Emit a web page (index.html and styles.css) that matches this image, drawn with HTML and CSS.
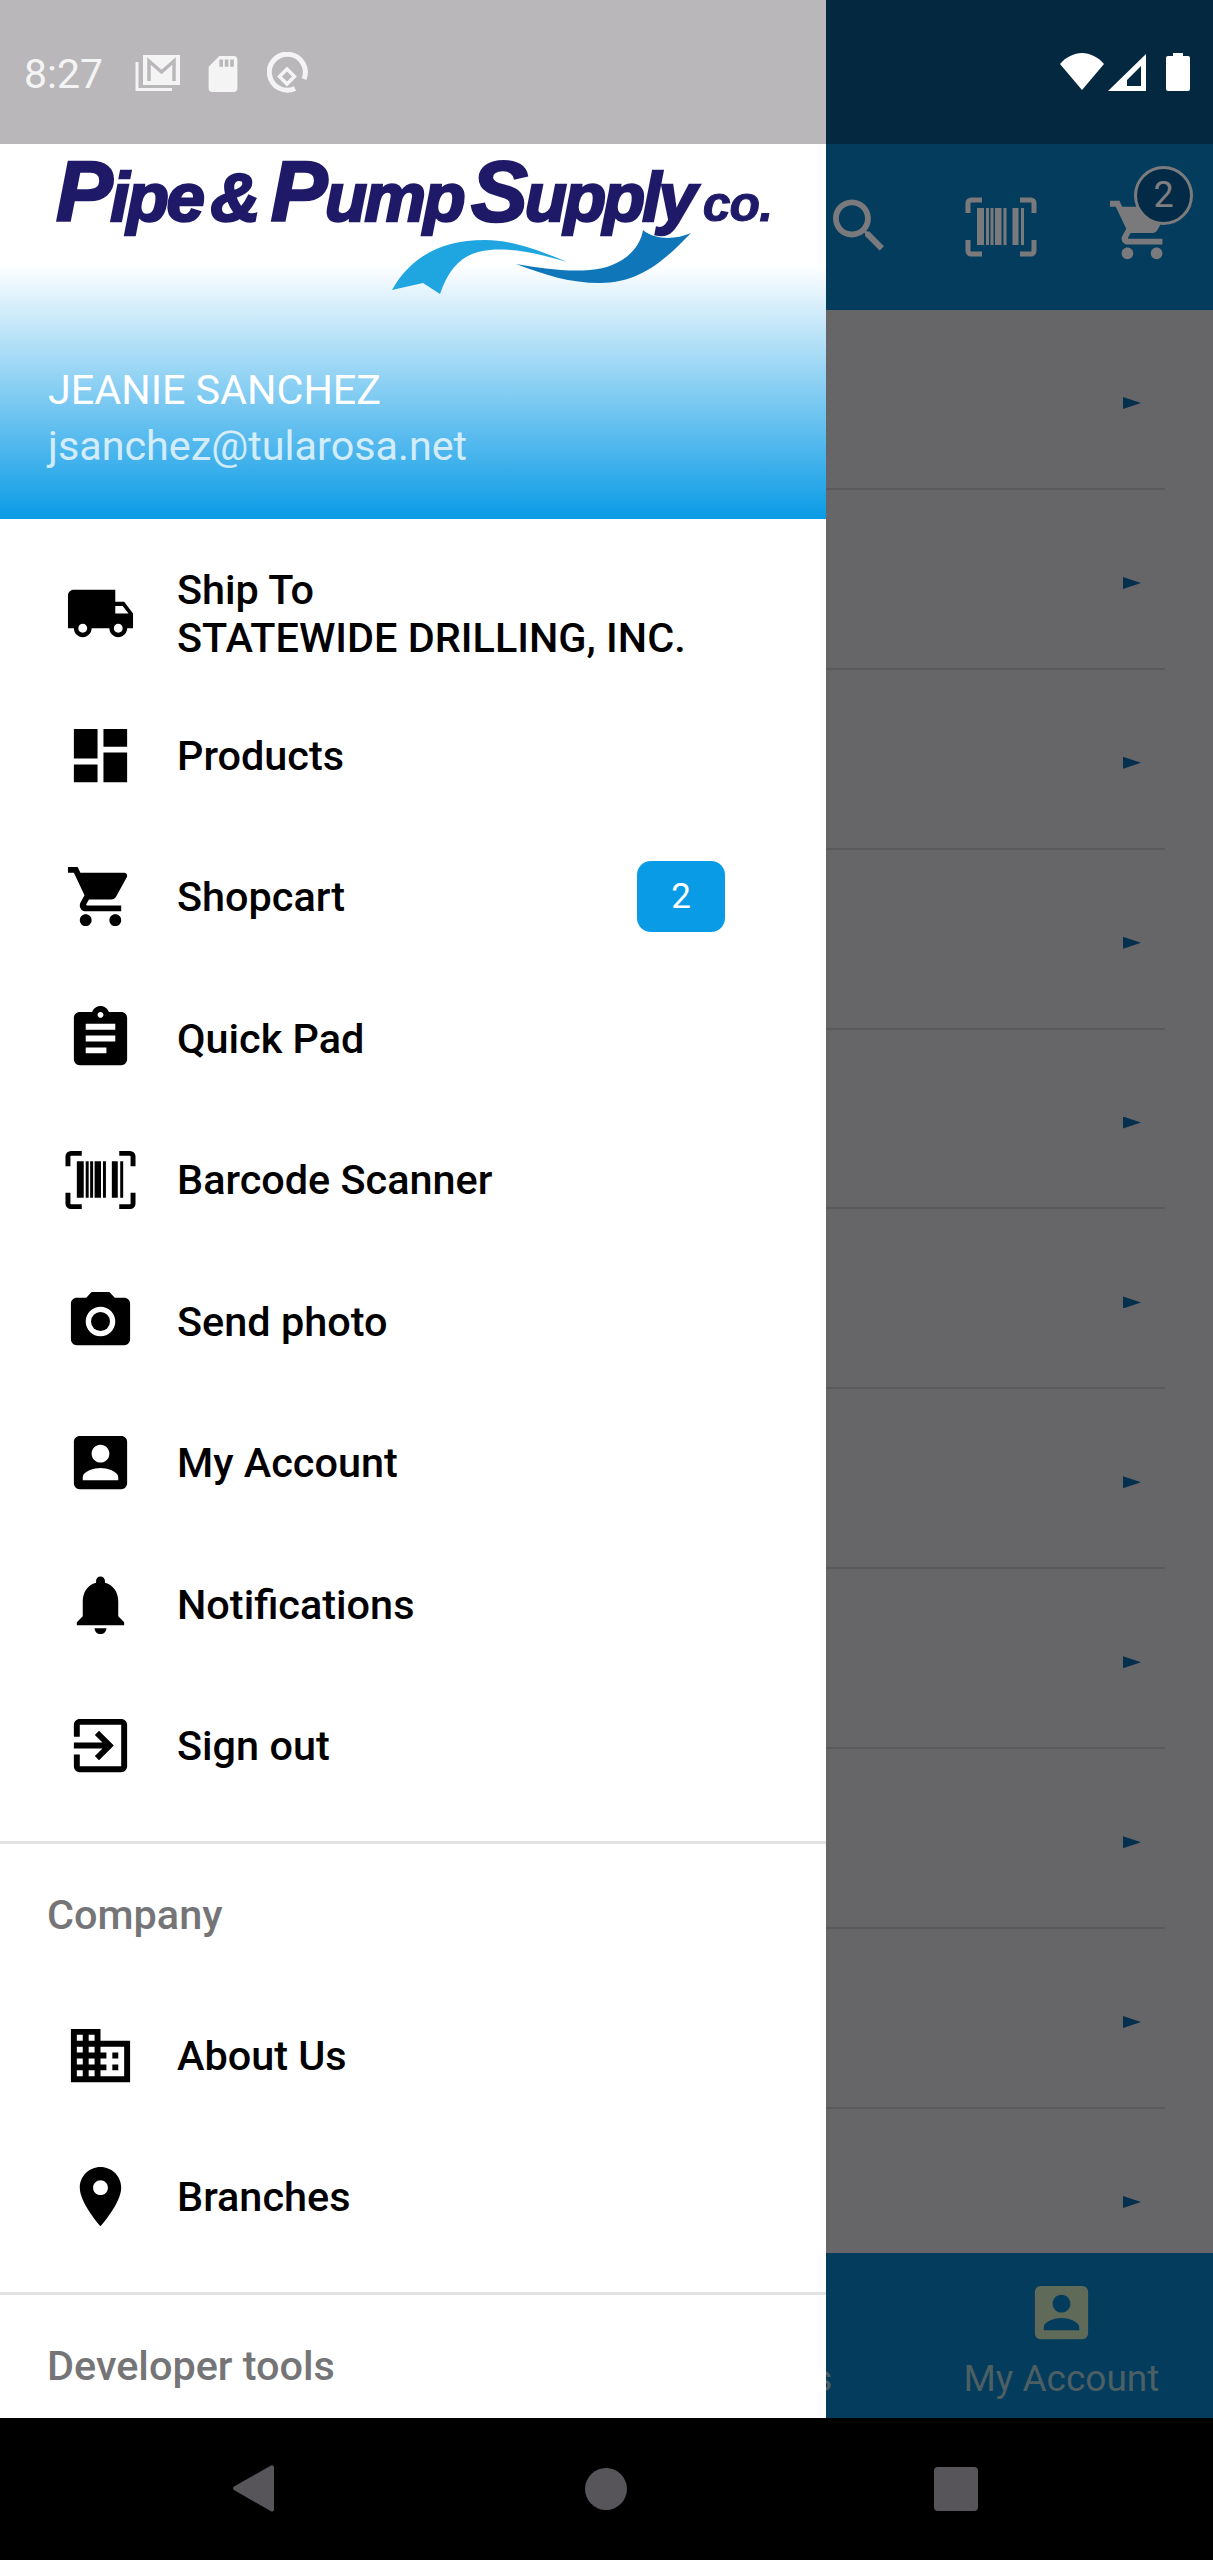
FILE: index.html
```html
<!DOCTYPE html>
<html lang="en">
<head>
    <meta charset="UTF-8">
    <meta name="viewport" content="width=device-width, initial-scale=1.0">
    <title>Pipe &amp; Pump Supply Co.</title>
    <link rel="stylesheet" href="styles.css">
</head>
<body>
    <svg class="defs" width="0" height="0">
        <symbol id="ic-cart" viewBox="0 0 24 24"><path d="M7 18c-1.1 0-1.99.9-1.99 2S5.9 22 7 22s2-.9 2-2-.9-2-2-2zM1 2v2h2l3.6 7.59-1.35 2.45c-.16.28-.25.61-.25.96 0 1.1.9 2 2 2h12v-2H7.42c-.14 0-.25-.11-.25-.25l.03-.12.9-1.63h7.45c.75 0 1.41-.41 1.75-1.03l3.58-6.49c.08-.14.12-.31.12-.48 0-.55-.45-1-1-1H5.21l-.94-2H1zm16 16c-1.1 0-1.99.9-1.99 2s.89 2 1.99 2 2-.9 2-2-.9-2-2-2z"/></symbol>
        <symbol id="ic-account" viewBox="0 0 24 24"><path d="M3 5v14c0 1.1.89 2 2 2h14c1.1 0 2-.9 2-2V5c0-1.1-.9-2-2-2H5c-1.11 0-2 .9-2 2zm12 4c0 1.66-1.34 3-3 3s-3-1.34-3-3 1.34-3 3-3 3 1.34 3 3zm-9 8c0-2 4-3.1 6-3.1s6 1.1 6 3.1v1H6v-1z"/></symbol>
        <symbol id="ic-barcode" viewBox="0 0 72 60">
            <path d="M17 3H6a3 3 0 0 0-3 3v10M55 3h11a3 3 0 0 1 3 3v10M17 57H6a3 3 0 0 1-3-3V43M55 57h11a3 3 0 0 0 3-3V43" fill="none" stroke="currentColor" stroke-width="5"/>
            <rect x="12" y="11" width="7" height="37"/><rect x="21" y="11" width="3" height="37"/><rect x="25.500" y="11" width="3" height="37"/>
            <rect x="30" y="11" width="6.500" height="37"/><rect x="38.500" y="11" width="3" height="37"/><rect x="47.500" y="11" width="6" height="37"/><rect x="56" y="11" width="3" height="37"/>
        </symbol>
    </svg>

    <div class="app">
        <div class="status-bar">
            <div class="status-right">
                <svg class="st-wifi" viewBox="0 0 44 37"><path d="M0 11C6 4 14 0 22 0s16 4 22 11L22 37z"/></svg>
                <svg class="st-signal" viewBox="0 0 38 37"><path fill-rule="evenodd" d="M38 0v37H0zM33 12 19 26v6h14z"/></svg>
                <svg class="st-battery" viewBox="0 0 24 38"><path d="M7 0h10v3h5a2 2 0 0 1 2 2v31a2 2 0 0 1-2 2H2a2 2 0 0 1-2-2V5a2 2 0 0 1 2-2h5z"/></svg>
            </div>
        </div>
        <div class="app-bar">
            <svg class="bar-search" viewBox="3 3 17.5 17.5"><path d="M15.5 14h-.79l-.28-.27C15.41 12.59 16 11.11 16 9.5 16 5.91 13.09 3 9.5 3S3 5.91 3 9.5 5.91 16 9.5 16c1.61 0 3.09-.59 4.23-1.57l.27.28v.79l5 4.99L20.49 19l-4.99-5zm-6 0C7.01 14 5 11.99 5 9.5S7.01 5 9.5 5 14 7.01 14 9.5 11.99 14 9.5 14z"/></svg>
            <svg class="bar-barcode"><use href="#ic-barcode"/></svg>
            <div class="bar-cart">
                <svg class="bar-cart-icon"><use href="#ic-cart"/></svg>
                <span class="bar-badge">2</span>
            </div>
        </div>
        <div class="rows">
            <div class="row"><span class="row-arrow"></span></div>
            <div class="row"><span class="row-arrow"></span></div>
            <div class="row"><span class="row-arrow"></span></div>
            <div class="row"><span class="row-arrow"></span></div>
            <div class="row"><span class="row-arrow"></span></div>
            <div class="row"><span class="row-arrow"></span></div>
            <div class="row"><span class="row-arrow"></span></div>
            <div class="row"><span class="row-arrow"></span></div>
            <div class="row"><span class="row-arrow"></span></div>
            <div class="row"><span class="row-arrow"></span></div>
            <div class="row"><span class="row-arrow"></span></div>
        </div>
        <div class="tabs">
            <div class="tab"></div>
            <div class="tab"></div>
            <div class="tab"><span class="tab-label">Products</span></div>
            <div class="tab">
                <svg class="tab-icon"><use href="#ic-account"/></svg>
                <span class="tab-label">My Account</span>
            </div>
        </div>
        <div class="nav-bar">
            <svg class="nav-back" viewBox="0 0 41 47"><path d="M38 .6A2 2 0 0 1 41 2.5v42a2 2 0 0 1-3 1.8L1 25a2 2 0 0 1 0-3.4z"/></svg>
            <span class="nav-home"></span>
            <span class="nav-recent"></span>
        </div>
    </div>

    <div class="drawer">
        <div class="drawer-status">
            <span class="clock">8:27</span>
            <svg class="st-mail" viewBox="0 0 45 37" fill="none" stroke="currentColor">
                <path d="M2 7v27.500h35" stroke-width="3"/>
                <path fill="currentColor" stroke="none" d="M8 0h37v30H8z"/>
                <path d="M14 26V6l12.500 11L39 6v20" stroke="#b9b7ba" stroke-width="3.500"/>
            </svg>
            <svg class="st-sd" viewBox="4 2 16 20"><path d="M18 2h-8L4.020 8 4 20c0 1.100.9 2 2 2h12c1.100 0 2-.9 2-2V4c0-1.100-.9-2-2-2zm-6 6h-2V4h2v4zm3 0h-2V4h2v4zm3 0h-2V4h2v4z"/></svg>
            <svg class="st-q" viewBox="0 0 41 41" fill="none" stroke="currentColor">
                <path d="M28 36.500A18 18 0 1 1 37 27" stroke-width="5"/>
                <path d="M20 17 27.500 24.500 20 32 12.500 24.500z" stroke-width="3.500"/>
            </svg>
        </div>
        <div class="drawer-header">
            <div class="logo">
                <div class="logo-text">
                    <span class="logo-word"><b>P</b>ipe</span>
                    <span class="logo-word logo-amp">&amp;</span>
                    <span class="logo-word"><b>P</b>ump</span>
                    <span class="logo-word logo-supply"><b>S</b>upply</span>
                    <span class="logo-co">co.</span>
                </div>
                <svg class="logo-swoosh" viewBox="380 225 320 75">
                    <path fill="#1fa6e0" d="M392 290C410 258 440 240 485 240c30 0 60 13 82 22-27-8-52-14-77-12-25 2-40 15-50 44l-17-11z"/>
                    <path fill="#0f76b9" d="M643 230c-3 20-23 38-53 40-25 2-50-2-74-6 29 11 54 19 84 19 40 0 65-23 91-50-16 7-36 7-48-3z"/>
                </svg>
            </div>
            <div class="user">
                <div class="user-name">JEANIE SANCHEZ</div>
                <div class="user-mail">jsanchez@tularosa.net</div>
            </div>
        </div>

        <div class="menu-group">
            <div class="menu-item">
                <svg class="menu-icon" viewBox="0 0 24 24"><path d="M20 8h-3V4H3c-1.100 0-2 .9-2 2v11h2c0 1.660 1.340 3 3 3s3-1.340 3-3h6c0 1.660 1.340 3 3 3s3-1.340 3-3h2v-5l-3-4zM6 18.500c-.83 0-1.500-.67-1.500-1.500s.67-1.500 1.500-1.500 1.500.67 1.500 1.500-.67 1.500-1.500 1.500zm13.500-9l1.960 2.500H17V9.500h2.500zm-1.500 9c-.83 0-1.500-.67-1.500-1.500s.67-1.500 1.500-1.500 1.500.67 1.500 1.500-.67 1.500-1.500 1.500z"/></svg>
                <span class="menu-label">Ship To<br>STATEWIDE DRILLING, INC.</span>
            </div>
            <div class="menu-item">
                <svg class="menu-icon" viewBox="0 0 24 24"><path d="M3 13h8V3H3v10zm0 8h8v-6H3v6zm10 0h8V11h-8v10zm0-18v6h8V3h-8z"/></svg>
                <span class="menu-label">Products</span>
            </div>
            <div class="menu-item">
                <svg class="menu-icon"><use href="#ic-cart"/></svg>
                <span class="menu-label">Shopcart</span>
                <span class="menu-badge">2</span>
            </div>
            <div class="menu-item">
                <svg class="menu-icon" viewBox="0 0 24 24"><path d="M19 3h-4.180C14.400 1.840 13.300 1 12 1c-1.300 0-2.400.84-2.820 2H5c-1.100 0-2 .9-2 2v14c0 1.100.9 2 2 2h14c1.100 0 2-.9 2-2V5c0-1.100-.9-2-2-2zm-7 0c.55 0 1 .45 1 1s-.45 1-1 1-1-.45-1-1 .45-1 1-1zm2 14H7v-2h7v2zm3-4H7v-2h10v2zm0-4H7V7h10v2z"/></svg>
                <span class="menu-label">Quick Pad</span>
            </div>
            <div class="menu-item">
                <svg class="menu-icon menu-icon-barcode"><use href="#ic-barcode"/></svg>
                <span class="menu-label">Barcode Scanner</span>
            </div>
            <div class="menu-item">
                <svg class="menu-icon" viewBox="0 0 24 24"><circle cx="12" cy="12" r="3.200"/><path d="M9 2L7.170 4H4c-1.100 0-2 .9-2 2v12c0 1.100.9 2 2 2h16c1.100 0 2-.9 2-2V6c0-1.100-.9-2-2-2h-3.170L15 2H9zm3 15c-2.760 0-5-2.240-5-5s2.240-5 5-5 5 2.240 5 5-2.240 5-5 5z"/></svg>
                <span class="menu-label">Send photo</span>
            </div>
            <div class="menu-item">
                <svg class="menu-icon"><use href="#ic-account"/></svg>
                <span class="menu-label">My Account</span>
            </div>
            <div class="menu-item">
                <svg class="menu-icon" viewBox="0 0 24 24"><path d="M12 22c1.100 0 2-.9 2-2h-4c0 1.100.89 2 2 2zm6-6v-5c0-3.070-1.640-5.640-4.500-6.320V4c0-.83-.67-1.500-1.500-1.500s-1.500.67-1.500 1.500v.68C7.630 5.360 6 7.920 6 11v5l-2 2v1h16v-1l-2-2z"/></svg>
                <span class="menu-label">Notifications</span>
            </div>
            <div class="menu-item">
                <svg class="menu-icon" viewBox="0 0 24 24"><path d="M10.090 15.590L11.500 17l5-5-5-5-1.410 1.410L12.670 11H3v2h9.670l-2.580 2.590zM19 3H5c-1.110 0-2 .9-2 2v4h2V5h14v14H5v-4H3v4c0 1.100.89 2 2 2h14c1.100 0 2-.9 2-2V5c0-1.100-.9-2-2-2z"/></svg>
                <span class="menu-label">Sign out</span>
            </div>
        </div>

        <div class="menu-group menu-group-titled">
            <div class="menu-title">Company</div>
            <div class="menu-item">
                <svg class="menu-icon" viewBox="0 0 24 24"><path d="M12 7V3H2v18h20V7H12zM6 19H4v-2h2v2zm0-4H4v-2h2v2zm0-4H4V9h2v2zm0-4H4V5h2v2zm4 12H8v-2h2v2zm0-4H8v-2h2v2zm0-4H8V9h2v2zm0-4H8V5h2v2zm10 12h-8v-2h2v-2h-2v-2h2v-2h-2V9h8v10zm-2-8h-2v2h2v-2zm0 4h-2v2h2v-2z"/></svg>
                <span class="menu-label">About Us</span>
            </div>
            <div class="menu-item">
                <svg class="menu-icon" viewBox="0 0 24 24"><path d="M12 2C8.130 2 5 5.130 5 9c0 5.250 7 13 7 13s7-7.750 7-13c0-3.870-3.130-7-7-7zm0 9.500c-1.380 0-2.500-1.120-2.500-2.500s1.120-2.500 2.500-2.500 2.500 1.120 2.500 2.500-1.120 2.500-2.500 2.500z"/></svg>
                <span class="menu-label">Branches</span>
            </div>
        </div>

        <div class="menu-group-titled">
            <div class="menu-title">Developer tools</div>
        </div>
    </div>
</body>
</html>
```

FILE: styles.css
```css
body {
    margin: 0;
    position: relative;
    width: 1213px;
    height: 2560px;
    overflow: hidden;
    font-family: Roboto, "Liberation Sans", sans-serif;
    background-color: #000;
}
.defs {
    position: absolute;
}

/* Screen behind the drawer, already dimmed */
.app {
    display: flex;
    flex-direction: column;
    height: 2560px;
}
.status-bar {
    height: 144px;
    flex-shrink: 0;
    display: flex;
    justify-content: flex-end;
    background-color: #03283f;
}
.status-right {
    display: flex;
    align-items: flex-start;
    padding: 53px 23px 0 0;
    fill: #fff;
}
.st-wifi {
    width: 44px;
    height: 37px;
}
.st-signal {
    width: 38px;
    height: 37px;
    margin: 1px 20px 0 4px;
}
.st-battery {
    width: 24px;
    height: 38px;
}
.app-bar {
    height: 166px;
    flex-shrink: 0;
    position: relative;
    display: flex;
    align-items: flex-start;
    justify-content: flex-end;
    background-color: #043c5d;
    color: #7a7a7c;
    fill: #7a7a7c;
}
.bar-search {
    width: 51px;
    height: 52px;
    margin: 55px 81px 0 0;
}
.bar-barcode {
    width: 72px;
    height: 60px;
    margin: 53px 73px 0 0;
}
.bar-cart {
    width: 103px;
    height: 114px;
    position: relative;
}
.bar-cart-icon {
    position: absolute;
    left: -3px;
    top: 51px;
    width: 70px;
    height: 70px;
}
.bar-badge {
    position: absolute;
    left: 24px;
    top: 22px;
    width: 53px;
    height: 53px;
    border: 3px solid #7b7b7d;
    border-radius: 50%;
    background-color: #032b47;
    color: #7f7f81;
    font-size: 36px;
    line-height: 53px;
    text-align: center;
}
.rows {
    flex: 1;
    overflow: hidden;
    background-color: #666567;
}
.row {
    height: 177.900px;
    margin-right: 48px;
    position: relative;
    border-bottom: 2px solid #5a595b;
}
.row-arrow {
    position: absolute;
    right: 24px;
    top: 87px;
    width: 18px;
    height: 12px;
    background-color: #05304d;
    clip-path: polygon(0 0, 100% 50%, 0 100%);
}
.tabs {
    height: 165px;
    flex-shrink: 0;
    display: grid;
    grid-template-columns: repeat(4, 303.25px);
    background-color: #043c5d;
}
.tab {
    display: flex;
    flex-direction: column;
    justify-content: flex-end;
    align-items: center;
    padding-bottom: 17px;
}
.tab-icon {
    width: 71px;
    height: 71px;
    margin-bottom: 9px;
    fill: #5f6a58;
}
.tab-label {
    font-size: 37px;
    line-height: 44px;
    color: #4c5f62;
}
.nav-bar {
    height: 142px;
    flex-shrink: 0;
    position: relative;
    background-color: #000;
}
.nav-back {
    position: absolute;
    left: 233px;
    top: 47px;
    width: 41px;
    height: 47px;
    fill: #57555a;
}
.nav-home {
    position: absolute;
    left: 585px;
    top: 50px;
    width: 42px;
    height: 42px;
    border-radius: 50%;
    background-color: #57555a;
}
.nav-recent {
    position: absolute;
    left: 934px;
    top: 49px;
    width: 44px;
    height: 44px;
    border-radius: 4px;
    background-color: #57555a;
}

/* Drawer */
.drawer {
    position: absolute;
    left: 0;
    top: 0;
    width: 826px;
    height: 2418px;
    overflow: hidden;
    background-color: #fff;
    color: #000;
}
.drawer-status {
    height: 144px;
    display: flex;
    align-items: flex-start;
    background-color: #b9b7ba;
    color: #f4f4f5;
    fill: #f4f4f5;
}
.clock {
    margin: 52px 0 0 24px;
    width: 111px;
    font-size: 41px;
    line-height: 44px;
}
.st-mail {
    width: 45px;
    height: 37px;
    margin-top: 55px;
}
.st-sd {
    width: 30px;
    height: 36px;
    margin: 56px 0 0 28px;
}
.st-q {
    width: 41px;
    height: 41px;
    margin: 52px 0 0 29px;
}
.drawer-header {
    height: 375px;
    box-sizing: border-box;
    padding: 10px 0 0 47px;
    background: linear-gradient(#fff 0, #fff 120px, #0a9be6 375px);
    color: #fff;
}
.logo {
    height: 147px;
    margin-left: 9px;
    position: relative;
}
.logo-text {
    display: flex;
    align-items: baseline;
    height: 75px;
    font-family: "Liberation Sans", Arial, sans-serif;
    font-style: italic;
    font-weight: bold;
    color: #1f1a68;
    line-height: 75px;
}
.logo-word {
    font-size: 69px;
    letter-spacing: -2.500px;
    margin-right: 8px;
    -webkit-text-stroke: 2.500px #1f1a68;
}
.logo-word b {
    font-size: 85px;
}
.logo-amp {
    margin-right: 13px;
}
.logo-supply {
    margin-right: 9px;
    letter-spacing: -3px;
}
.logo-co {
    font-size: 50px;
    letter-spacing: -1px;
    -webkit-text-stroke: 1px #1f1a68;
}
.logo-swoosh {
    position: absolute;
    left: 324px;
    top: 71px;
    width: 320px;
    height: 75px;
}
.user {
    margin-top: 61px;
    padding-left: 1px;
    font-size: 41.300px;
    line-height: 56px;
    font-weight: 400;
}
.user-mail {
    opacity: 0.75;
}
.menu-group {
    padding: 24px 0;
    border-bottom: 3px solid #e2e2e2;
}
.menu-item {
    height: 141.500px;
    display: flex;
    align-items: center;
}
.menu-icon {
    width: 71px;
    height: 71px;
    margin-left: 65px;
    flex-shrink: 0;
}
.menu-icon-barcode {
    height: 60px;
}
.menu-label {
    margin-left: 41px;
    padding-top: 1px;
    font-size: 41.400px;
    line-height: 48px;
    font-weight: 500;
}
.menu-badge {
    margin-left: auto;
    margin-right: 101px;
    width: 88px;
    height: 71px;
    border-radius: 14px;
    background-color: #0a9be6;
    color: #fff;
    font-size: 35px;
    line-height: 71px;
    text-align: center;
}
.menu-group-titled {
    padding-top: 0;
}
.menu-title {
    height: 141px;
    padding-left: 47px;
    color: #757578;
    font-size: 41.400px;
    line-height: 143px;
    font-weight: 500;
}
```
